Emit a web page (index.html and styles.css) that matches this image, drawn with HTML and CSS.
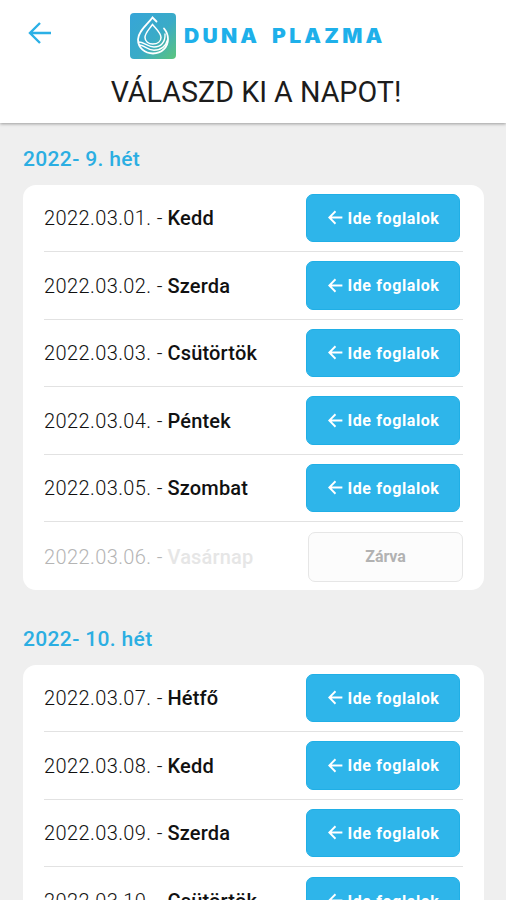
FILE: index.html
```html
<!DOCTYPE html>
<html lang="hu">
<head>
<meta charset="utf-8">
<title>Duna Plazma</title>
<link rel="stylesheet" href="styles.css">
</head>
<body>
<svg class="defs" width="0" height="0" aria-hidden="true">
  <symbol id="arrow" viewBox="0 0 24 24"><path d="M23 12H2M12 2L2 12l10 10" fill="none" stroke="currentColor"/></symbol>
</svg>
<div class="screen">
  <header class="header">
    <div class="bar">
      <svg class="back"><use href="#arrow"/></svg>
      <svg class="logo" viewBox="0 0 46 46">
        <defs><linearGradient id="g" x1="0" y1="0" x2="1" y2="1"><stop offset="0" stop-color="#36a5d8"/><stop offset=".55" stop-color="#3aabc7"/><stop offset="1" stop-color="#5cc57c"/></linearGradient></defs>
        <rect width="46" height="46" rx="4" fill="url(#g)"/>
        <g fill="none" stroke="#fff" stroke-linecap="round">
          <path d="M26.500 8.500L22.500 4.500C18 11 8 18 8 26.500C8 35 15 40.500 23 40.500C31.500 40.500 38 34.500 38 26C38 21.500 36.500 18.500 34 15.500" stroke-width="1.800"/>
          <path d="M22.500 11.500C19 16.500 15 20 15 24.500C15 28.500 18.500 31 22.800 31C27.500 31 31 28.500 31 24.500C31 20 26.500 16.500 22.500 11.500Z" stroke-width="1.500"/>
          <path d="M8.500 29C14 29 18 34 24 34C31 34 35.500 29 35 21M9.500 32C15 32.500 18 37.300 24 37.300C31 37.300 36 33 37.500 27" stroke-width="1.400"/>
        </g>
      </svg>
      <span class="brand">DUNA PLAZMA</span>
    </div>
    <h1 class="title">VÁLASZD KI A NAPOT!</h1>
  </header>
  <main class="content">
    <section class="week">
      <h2 class="week-title">2022- 9. hét</h2>
      <ul class="card">
        <li class="row"><span class="day"><span class="date">2022.03.01. -</span><b>Kedd</b></span><button class="btn"><svg><use href="#arrow"/></svg>Ide foglalok</button></li>
        <li class="row"><span class="day"><span class="date">2022.03.02. -</span><b>Szerda</b></span><button class="btn"><svg><use href="#arrow"/></svg>Ide foglalok</button></li>
        <li class="row"><span class="day"><span class="date">2022.03.03. -</span><b>Csütörtök</b></span><button class="btn"><svg><use href="#arrow"/></svg>Ide foglalok</button></li>
        <li class="row"><span class="day"><span class="date">2022.03.04. -</span><b>Péntek</b></span><button class="btn"><svg><use href="#arrow"/></svg>Ide foglalok</button></li>
        <li class="row"><span class="day"><span class="date">2022.03.05. -</span><b>Szombat</b></span><button class="btn"><svg><use href="#arrow"/></svg>Ide foglalok</button></li>
        <li class="row closed"><span class="day"><span class="date">2022.03.06. -</span><b>Vasárnap</b></span><button class="btn" disabled>Zárva</button></li>
      </ul>
    </section>
    <section class="week">
      <h2 class="week-title">2022- 10. hét</h2>
      <ul class="card">
        <li class="row"><span class="day"><span class="date">2022.03.07. -</span><b>Hétfő</b></span><button class="btn"><svg><use href="#arrow"/></svg>Ide foglalok</button></li>
        <li class="row"><span class="day"><span class="date">2022.03.08. -</span><b>Kedd</b></span><button class="btn"><svg><use href="#arrow"/></svg>Ide foglalok</button></li>
        <li class="row"><span class="day"><span class="date">2022.03.09. -</span><b>Szerda</b></span><button class="btn"><svg><use href="#arrow"/></svg>Ide foglalok</button></li>
        <li class="row"><span class="day"><span class="date">2022.03.10. -</span><b>Csütörtök</b></span><button class="btn"><svg><use href="#arrow"/></svg>Ide foglalok</button></li>
      </ul>
    </section>
  </main>
</div>
</body>
</html>
```
FILE: styles.css
```css
* { box-sizing: border-box; }
body { margin: 0; background: #efefef; font-family: Roboto, "Liberation Sans", sans-serif; }
.defs { display: block; }
.screen { height: 900px; overflow: hidden; display: flex; flex-direction: column; }
.header { flex: none; height: 123px; background: #fff; box-shadow: 0 1px 3px rgba(0, 0, 0, .35); }
.bar { display: flex; align-items: center; height: 59px; padding: 12px 0 0 28px; }
.back { width: 24px; height: 24px; margin: -5px 78px 0 0; color: #2bb0e6; stroke-width: 2.4; }
.logo { width: 46px; height: 46px; flex: none; }
.brand { margin-left: 7.5px; padding-top: 1px; font-family: Inter, sans-serif; font-weight: 900; font-size: 19.5px; letter-spacing: 3px; word-spacing: 4px; line-height: 46px; color: #1eb0ea; white-space: nowrap; transform: scaleX(1.08); transform-origin: left center; }
.title { margin: 15px 0 0; padding-left: 6px; text-align: center; font-weight: 400; font-size: 28.7px; line-height: 36px; color: #1c1c1c; white-space: nowrap; }
.content { padding: 0 22px 0 23px; }
.week { padding-top: 22px; margin-bottom: 13.5px; }
.week-title { margin: 0 0 11.5px; font-weight: 500; font-size: 21px; line-height: 28px; letter-spacing: .35px; color: #2baee2; }
.card { list-style: none; margin: 0; padding: 0 21px; background: #fff; border-radius: 13px; }
.row { display: flex; justify-content: space-between; align-items: center; height: 67.5px; padding-right: 3px; border-bottom: 1.5px solid #e2e2e2; }
.row:last-child { border-bottom: 0; }
.day { display: flex; padding-top: 1px; font-size: 20px; letter-spacing: .17px; color: #111; }
.date { width: 123.5px; font-weight: 300; letter-spacing: .4px; white-space: nowrap; }
.day b { font-weight: 500; }
.btn { display: flex; align-items: center; justify-content: center; gap: 4px; width: 154px; height: 48.5px; padding: 2px 0 0 2px; border: 1px solid #20afe6; border-radius: 7px; background: #2eb5ea; color: #fff; font: 700 16px/20px Roboto, sans-serif; letter-spacing: .6px; white-space: nowrap; }
.btn svg { width: 15px; height: 15px; margin-top: -2px; stroke-width: 3; }
.closed { padding: 1.5px 0 0; }
.closed .day { color: #b5b5b5; }
.closed b { color: #e6e6e6; }
.closed .btn { width: 155px; height: 50px; background: #fcfcfc; border: 1.5px solid #e6e6e6; color: #b2b2b2; letter-spacing: -.1px; padding: 1px 0 0; }
```
